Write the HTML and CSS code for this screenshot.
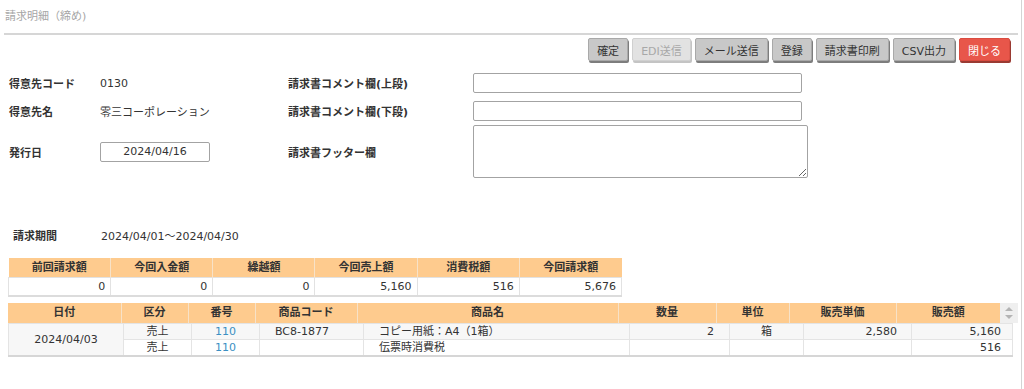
FILE: index.html
```html
<!DOCTYPE html>
<html lang="ja">
<head>
<meta charset="utf-8">
<title>請求明細（締め)</title>
<link rel="stylesheet" href="styles.css">
</head>
<body>
<div class="page">
  <div class="title">請求明細（締め)</div>
  <div class="rule"></div>

  <div class="toolbar">
    <button class="btn">確定</button>
    <button class="btn disabled" disabled>EDI送信</button>
    <button class="btn">メール送信</button>
    <button class="btn">登録</button>
    <button class="btn">請求書印刷</button>
    <button class="btn">CSV出力</button>
    <button class="btn danger">閉じる</button>
  </div>

  <div class="form">
    <div class="frow r1">
      <div class="lbl">得意先コード</div>
      <div class="val">0130</div>
      <div class="lbl2">請求書コメント欄(上段)</div>
      <input class="txt" type="text">
    </div>
    <div class="frow r2">
      <div class="lbl">得意先名</div>
      <div class="val">零三コーポレーション</div>
      <div class="lbl2">請求書コメント欄(下段)</div>
      <input class="txt" type="text">
    </div>
    <div class="frow r3">
      <div class="lbl">発行日</div>
      <div class="val"><input class="date" type="text" value="2024/04/16"></div>
      <div class="lbl2">請求書フッター欄</div>
      <textarea class="area"></textarea>
    </div>
  </div>

  <div class="period">
    <span class="plbl">請求期間</span>
    <span>2024/04/01～2024/04/30</span>
  </div>

  <table class="summary">
    <thead>
      <tr><th>前回請求額</th><th>今回入金額</th><th>繰越額</th><th>今回売上額</th><th>消費税額</th><th>今回請求額</th></tr>
    </thead>
    <tbody>
      <tr><td>0</td><td>0</td><td>0</td><td>5,160</td><td>516</td><td>5,676</td></tr>
    </tbody>
  </table>

  <div class="detail">
    <div class="dhead">
      <table class="htable">
        <colgroup>
          <col class="h1"><col class="h2"><col class="h3"><col class="h4"><col class="h5"><col class="h6"><col class="h7"><col class="h8"><col class="h9">
        </colgroup>
        <tr><th>日付</th><th>区分</th><th>番号</th><th>商品コード</th><th>商品名</th><th>数量</th><th>単位</th><th>販売単価</th><th>販売額</th></tr>
      </table>
      <div class="scroll"><span class="up"></span><span class="down"></span></div>
    </div>
    <table class="btable">
      <colgroup>
        <col class="b1"><col class="b2"><col class="b3"><col class="b4"><col class="b5"><col class="b6"><col class="b7"><col class="b8"><col class="b9">
      </colgroup>
      <tr class="odd">
        <td class="date-cell" rowspan="2">2024/04/03</td>
        <td class="c">売上</td>
        <td class="c link">110</td>
        <td class="code">BC8-1877</td>
        <td class="name">コピー用紙：A4（1箱）</td>
        <td class="qty">2</td>
        <td class="c">箱</td>
        <td class="price">2,580</td>
        <td class="amt">5,160</td>
      </tr>
      <tr class="even">
        <td class="c">売上</td>
        <td class="c link">110</td>
        <td class="code"></td>
        <td class="name">伝票時消費税</td>
        <td class="qty"></td>
        <td class="c"></td>
        <td class="price"></td>
        <td class="amt">516</td>
      </tr>
    </table>
  </div>
</div>
</body>
</html>
```

FILE: styles.css
```css
* { box-sizing: border-box; }

body {
  margin: 0;
  font-family: "DejaVu Sans", "Noto Sans CJK JP", sans-serif;
  font-size: 11px;
  color: #333;
  background: #fff;
}

.page {
  width: 1022px;
  height: 389px;
  border-right: 1px solid #d4d4d4;
  overflow: hidden;
}

.title {
  height: 33px;
  padding: 10px 0 0 5px;
  line-height: 14px;
  color: #a6a6a6;
}

.rule {
  height: 2px;
  margin: 0 3px 0 4px;
  background: #d6d6d6;
}

/* toolbar */
.toolbar {
  display: flex;
  justify-content: flex-end;
  gap: 4px;
  margin-top: 3px;
  padding-right: 11px;
}

.btn {
  height: 23px;
  padding: 0 8px;
  font-family: inherit;
  font-size: 11px;
  color: #333;
  background: #c8c8c8;
  border: 1px solid #a9a9a9;
  border-radius: 2px;
  box-shadow: 1px 2px 0 #7d7d7d;
}

.btn.disabled {
  color: #a8a8a8;
  background: #e2e2e2;
  border-color: #d0d0d0;
  box-shadow: 1px 2px 0 #c4c4c4;
}

.btn.danger {
  color: #fff;
  background: #e8564a;
  border-color: #d94c40;
  box-shadow: 1px 2px 0 #9a3a32;
}

/* form */
.form {
  margin-top: 12px;
}

.frow {
  display: flex;
  align-items: center;
  height: 20px;
  padding-left: 9px;
}

.frow.r2 { margin-top: 8px; }
.frow.r3 { margin-top: 4px; height: 53px; }

.lbl { width: 91px; font-weight: bold; }
.val { width: 188px; }
.lbl2 { width: 185px; font-weight: bold; }

.txt, .date, .area {
  font-family: inherit;
  font-size: 11px;
  color: #333;
  border: 1px solid #a3a3a3;
  border-radius: 2px;
  background: #fff;
}

.txt { width: 329px; height: 20px; }
.date { width: 110px; height: 20px; text-align: center; padding: 0; }
.area { width: 335px; height: 53px; }

/* period */
.period {
  display: flex;
  height: 14px;
  line-height: 14px;
  margin-top: 52px;
  padding-left: 13px;
}

.plbl { width: 88px; font-weight: bold; }

/* summary */
.summary {
  margin: 14px 0 0 8px;
  width: 614px;
  border-collapse: collapse;
  table-layout: fixed;
}

.summary th {
  height: 19px;
  padding: 0;
  font-weight: bold;
  background: #fecb8e;
  border-left: 1px solid #f7e2c8;
  line-height: 19px;
}

.summary th:first-child { border-left: none; }

.summary td {
  height: 18px;
  padding: 0 5px 0 0;
  text-align: right;
  border: 1px solid #e2e2e2;
  border-bottom: 2px solid #dcdcdc;
  line-height: 15px;
}

/* detail */
.detail {
  margin: 6px 0 0 8px;
  width: 1010px;
}

.dhead {
  display: flex;
}

.htable {
  width: 992px;
  border-collapse: collapse;
  table-layout: fixed;
}

.htable th {
  height: 20px;
  padding: 0;
  font-weight: bold;
  background: #fecb8e;
  border-left: 1px solid #f7e2c8;
  line-height: 19px;
}

.htable th:first-child { border-left: none; }

.h1 { width: 113px; }
.h2 { width: 67px; }
.h3 { width: 67px; }
.h4 { width: 102px; }
.h5 { width: 261px; }
.h6 { width: 98px; }
.h7 { width: 73px; }
.h8 { width: 107px; }
.h9 { width: 104px; }

.scroll {
  width: 18px;
  height: 20px;
  background: #efefef;
  display: flex;
  flex-direction: column;
  align-items: center;
  justify-content: center;
  gap: 4px;
}

.up, .down {
  width: 0;
  height: 0;
  border-left: 4px solid transparent;
  border-right: 4px solid transparent;
}

.up { border-bottom: 4px solid #b4b4b4; }
.down { border-top: 4px solid #b4b4b4; }

.btable {
  width: 1004px;
  border-collapse: collapse;
  table-layout: fixed;
  border-bottom: 2px solid #d6d6d6;
}

.b1 { width: 115px; }
.b2 { width: 68px; }
.b3 { width: 68px; }
.b4 { width: 104px; }
.b5 { width: 266px; }
.b6 { width: 100px; }
.b7 { width: 74px; }
.b8 { width: 108px; }
.b9 { width: 101px; }

.btable td {
  height: 16px;
  padding: 0;
  line-height: 15px;
  border: 1px solid #e4e4e4;
  white-space: nowrap;
}

.btable tr.odd td { background: #f7f7f7; }
.btable tr.even td { background: #fff; }
.btable td.date-cell { background: #f7f7f7; text-align: center; }

.c { text-align: center; }
.link { color: #3b8fc3; }
.code { padding-left: 15px !important; }
.name { padding-left: 15px !important; }
.qty { text-align: right; padding-right: 15px !important; }
.price { text-align: right; padding-right: 14px !important; }
.amt { text-align: right; padding-right: 11px !important; }
```
